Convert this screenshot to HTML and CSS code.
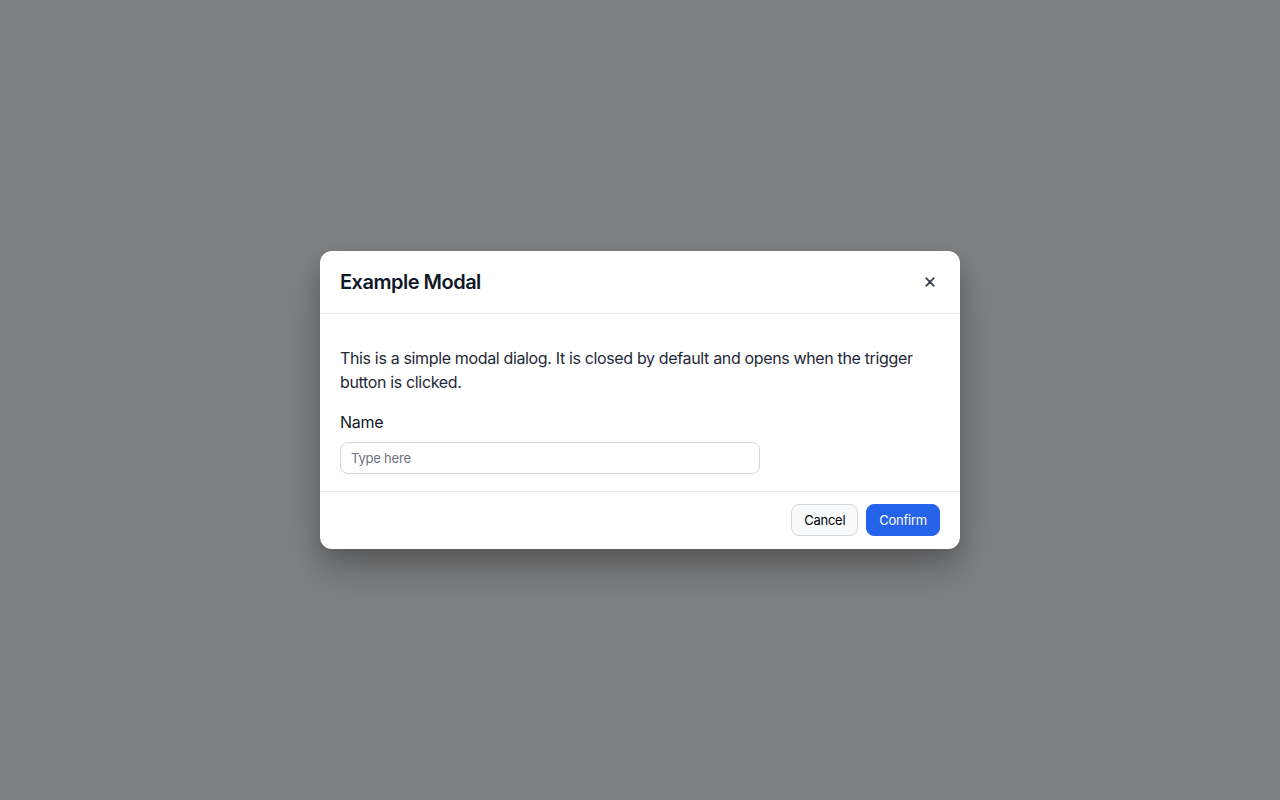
FILE: index.html
```html
<!DOCTYPE html>
<html lang="en">
<head>
<meta charset="utf-8">
<title>Example Modal</title>
<link rel="stylesheet" href="styles.css">
</head>
<body>
<div class="backdrop">
  <div class="modal" role="dialog" aria-labelledby="modal-title">
    <div class="modal-header">
      <h2 id="modal-title" class="modal-title">Example Modal</h2>
      <button class="close-btn" aria-label="Close">
        <svg width="10" height="10" viewBox="0 0 10 10"><path d="M1.2 1.2L8.8 8.8M8.8 1.2L1.2 8.8" stroke="#334155" stroke-width="1.8" stroke-linecap="round"/></svg>
      </button>
    </div>
    <div class="modal-body">
      <p class="modal-text">This is a simple modal dialog. It is closed by default and opens when the trigger button is clicked.</p>
      <label class="field-label" for="name">Name</label>
      <input id="name" class="field-input" type="text" placeholder="Type here">
    </div>
    <div class="modal-footer">
      <button class="btn btn-secondary">Cancel</button>
      <button class="btn btn-primary">Confirm</button>
    </div>
  </div>
</div>
</body>
</html>
```
FILE: styles.css
```css
* { box-sizing: border-box; }
html, body { margin: 0; padding: 0; height: 100%; }
body {
  font-family: Inter, "Noto Sans", sans-serif;
  color: #1f2937;
}
.backdrop {
  width: 100%;
  height: 100%;
  background: #7f8082;
  display: flex;
  align-items: center;
  justify-content: center;
}
.modal {
  width: 640px;
  background: #ffffff;
  border-radius: 12px;
  box-shadow: 0 20px 40px rgba(0,0,0,0.25), 0 8px 16px rgba(0,0,0,0.12);
  overflow: hidden;
}
.modal-header {
  display: flex;
  align-items: center;
  justify-content: space-between;
  padding: 16px 20px;
  border-bottom: 1px solid #e5e7eb;
}
.modal-title {
  margin: 0;
  font-size: 20px;
  line-height: 30px;
  font-weight: 600;
  letter-spacing: -0.5px;
  color: #111827;
}
.close-btn {
  width: 20px;
  height: 20px;
  border: none;
  background: none;
  padding: 0;
  display: flex;
  align-items: center;
  justify-content: center;
  cursor: pointer;
}
.modal-body {
  padding: 16px 20px 17px;
  border-bottom: 1px solid #e5e7eb;
}
.modal-text {
  margin: 16px 0;
  font-size: 16px;
  line-height: 24px;
  letter-spacing: -0.35px;
  color: #1f2937;
}
.field-label {
  display: block;
  font-size: 16px;
  line-height: 24px;
  letter-spacing: -0.3px;
  margin-bottom: 8px;
  color: #111827;
}
.field-input {
  display: block;
  width: 420px;
  height: 32px;
  border: 1px solid #d1d5db;
  border-radius: 8px;
  padding: 0 10px;
  font-family: Inter, "Noto Sans", sans-serif;
  font-size: 13px;
  letter-spacing: -0.2px;
  color: #111827;
  outline: none;
}
.field-input::placeholder { color: #6b7280; }
.modal-footer {
  display: flex;
  justify-content: flex-end;
  gap: 8px;
  padding: 12px 20px 13px;
}
.btn {
  height: 32px;
  padding: 0 12px;
  border-radius: 8px;
  font-family: Inter, "Noto Sans", sans-serif;
  font-size: 13px;
  letter-spacing: -0.25px;
  cursor: pointer;
}
.btn-secondary {
  background: #f8fafc;
  border: 1px solid #d1d5db;
  color: #000000;
}
.btn-primary {
  background: #2563eb;
  border: 1px solid #2563eb;
  color: #ffffff;
}
```
